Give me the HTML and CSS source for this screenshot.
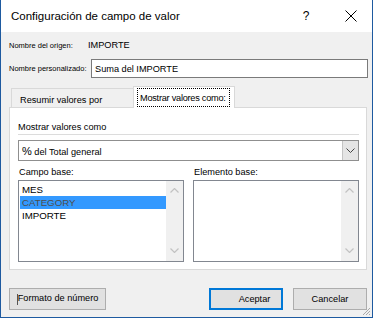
FILE: index.html
```html
<!DOCTYPE html>
<html>
<head>
    <title>Configuración de campo de valor</title>
    <link rel="stylesheet" href="styles.css">
</head>
<body>
    <div class="dialog">
        <div class="titlebar">
            <span class="title">Configuración de campo de valor</span>
            <span class="help">?</span>
            <span class="close">
                <svg width="12" height="12" viewBox="0 0 12 12"><path d="M0.5 0.5 L11.5 11.5 M11.5 0.5 L0.5 11.5" stroke="#000" stroke-width="1" fill="none"/></svg>
            </span>
        </div>

        <div class="content">
            <div class="origin">
                <span class="small-label">Nombre del origen:</span>
                <span class="source">IMPORTE</span>
            </div>
            <div class="custom">
                <span class="small-label">Nombre personalizado:</span>
                <input type="text" value="Suma del IMPORTE">
            </div>

            <div class="tabs">
                <div class="tab">Resumir valores por</div>
                <div class="tab active"><span class="focus">Mostrar valores como:</span></div>
            </div>

            <div class="panel">
                <div class="section-label">Mostrar valores como</div>
                <div class="select">
                    <span class="select-text"><span class="pct">%</span> del Total general</span>
                    <span class="select-btn">
                        <svg width="9" height="5" viewBox="0 0 9 5"><path d="M0.5 0.5 L4.5 4.5 L8.5 0.5" stroke="#444" stroke-width="1" fill="none"/></svg>
                    </span>
                </div>

                <div class="fields">
                    <div class="field">
                        <div class="field-label">Campo base:</div>
                        <div class="listbox">
                            <div class="items">
                                <div class="item">MES</div>
                                <div class="item selected">CATEGORY</div>
                                <div class="item">IMPORTE</div>
                            </div>
                            <div class="scroll">
                                <svg width="9" height="5" viewBox="0 0 9 5"><path d="M0.5 4.5 L4.5 0.5 L8.5 4.5" stroke="#c2c2c2" stroke-width="1.2" fill="none"/></svg>
                                <svg width="9" height="5" viewBox="0 0 9 5"><path d="M0.5 0.5 L4.5 4.5 L8.5 0.5" stroke="#c2c2c2" stroke-width="1.2" fill="none"/></svg>
                            </div>
                        </div>
                    </div>
                    <div class="field">
                        <div class="field-label">Elemento base:</div>
                        <div class="listbox">
                            <div class="items"></div>
                            <div class="scroll">
                                <svg width="9" height="5" viewBox="0 0 9 5"><path d="M0.5 4.5 L4.5 0.5 L8.5 4.5" stroke="#c2c2c2" stroke-width="1.2" fill="none"/></svg>
                                <svg width="9" height="5" viewBox="0 0 9 5"><path d="M0.5 0.5 L4.5 4.5 L8.5 0.5" stroke="#c2c2c2" stroke-width="1.2" fill="none"/></svg>
                            </div>
                        </div>
                    </div>
                </div>
            </div>

            <div class="buttons">
                <button class="btn format"><span class="caret"></span>Formato de número</button>
                <button class="btn ok">Aceptar</button>
                <button class="btn cancel">Cancelar</button>
            </div>
        </div>

        <svg class="grip" width="10" height="10" viewBox="0 0 10 10">
            <path d="M9 2 L2 9 M9 5 L5 9 M9 8 L8 9" stroke="#a8a8a8" stroke-width="1" fill="none"/>
        </svg>
    </div>
</body>
</html>
```

FILE: styles.css
```css
body {
    margin: 0;
    background: #ffffff;
    font-family: "Liberation Sans", Arial, sans-serif;
    font-size: 9.2px;
    color: #000;
}
.dialog {
    width: 371px;
    height: 317px;
    border: 1px solid #1e5aa0;
    border-top: none;
    display: flex;
    flex-direction: column;
    position: relative;
}
.titlebar {
    height: 32px;
    flex-shrink: 0;
    background: white;
    display: flex;
    align-items: center;
    padding-left: 10px;
}
.title {
    flex: 1;
    font-size: 11.5px;
}
.help {
    width: 12px;
    text-align: center;
    font-size: 12px;
    margin-right: 33px;
}
.close {
    width: 12px;
    height: 12px;
    margin-right: 15px;
    display: flex;
}
.content {
    flex: 1;
    background: #f0f0f0;
    padding: 0 5px 0 8px;
    display: flex;
    flex-direction: column;
}
.origin {
    margin-top: 6px;
    height: 14px;
    display: flex;
    align-items: center;
}
.small-label {
    font-size: 7.5px;
}
.origin .small-label {
    width: 79px;
}
.custom .small-label {
    width: 82px;
}
.custom {
    margin-top: 7px;
    height: 19px;
    display: flex;
    align-items: center;
}
input {
    width: 277px;
    height: 19px;
    box-sizing: border-box;
    margin: 0 -1px 0 0;
    padding: 0 3px;
    border: 1px solid #7a7a7a;
    font-family: inherit;
    font-size: 9.2px;
    color: #000;
    outline: none;
}
.tabs {
    margin-top: 8px;
    height: 21px;
    padding-left: 2px;
    display: flex;
    align-items: flex-end;
    position: relative;
    z-index: 1;
}
.tab {
    width: 123px;
    height: 19px;
    box-sizing: border-box;
    border: 1px solid #d9d9d9;
    border-bottom: none;
    background: #f0f0f0;
    padding: 0 8px 2px 8px;
    display: flex;
    align-items: flex-end;
}
.tab.active {
    width: 102px;
    height: 22px;
    margin-left: -1px;
    margin-bottom: -1px;
    background: white;
    padding: 1px 4px 0 3px;
    align-items: flex-start;
}
.focus {
    width: 93px;
    height: 19px;
    box-sizing: border-box;
    outline: 1px dotted #000;
    outline-offset: -1px;
    padding: 0 0 0 3px;
    line-height: 21px;
    letter-spacing: -0.25px;
    white-space: nowrap;
}
.panel {
    background: white;
    border: 1px solid #d9d9d9;
    padding: 12px 7px 7px 8px;
}
.section-label {
    height: 14px;
    line-height: 14px;
    border-bottom: 1px solid #dcdcdc;
}
.select {
    margin-top: 5px;
    height: 21px;
    box-sizing: border-box;
    border: 1px solid #8f8f8f;
    display: flex;
    align-items: center;
}
.select-text {
    flex: 1;
    padding-left: 3px;
}
.pct {
    font-size: 11px;
}
.select-btn {
    width: 16px;
    height: 100%;
    box-sizing: border-box;
    border-left: 1px solid #c4c4c4;
    background: #e5e5e5;
    display: flex;
    align-items: center;
    justify-content: center;
}
.fields {
    margin-top: 4px;
    display: flex;
    gap: 9px;
}
.field {
    width: 166px;
}
.field-label {
    height: 14px;
    line-height: 14px;
    padding-left: 1px;
}
.listbox {
    margin-top: 1px;
    height: 82px;
    box-sizing: border-box;
    border: 1px solid #828790;
    display: flex;
    background: white;
}
.items {
    flex: 1;
    padding-top: 2px;
}
.item {
    height: 13px;
    line-height: 14px;
    font-size: 9.7px;
    padding-left: 2px;
    margin-left: 1px;
}
.item.selected {
    background: #3399ff;
    color: #4d4d4d;
}
.scroll {
    width: 17px;
    background: #f0f0f0;
    display: flex;
    flex-direction: column;
    justify-content: space-between;
    align-items: center;
    padding: 7px 0 8px 0;
    box-sizing: border-box;
}
.buttons {
    margin-top: 18px;
    display: flex;
}
.btn {
    height: 22px;
    border: 1px solid #adadad;
    background: #e1e1e1;
    font-family: inherit;
    font-size: 9.2px;
    color: #000;
    padding: 0;
    margin: 0;
}
.format {
    width: 97px;
    margin-right: auto;
}
.caret {
    display: inline-block;
    width: 0;
    height: 11px;
    border-left: 1px solid #555;
    vertical-align: middle;
}
.ok {
    width: 74px;
    border: 2px solid #0078d7;
    padding-left: 17px;
}
.cancel {
    width: 74px;
    margin-left: 10px;
}
.grip {
    position: absolute;
    right: 1px;
    bottom: 1px;
}
```
